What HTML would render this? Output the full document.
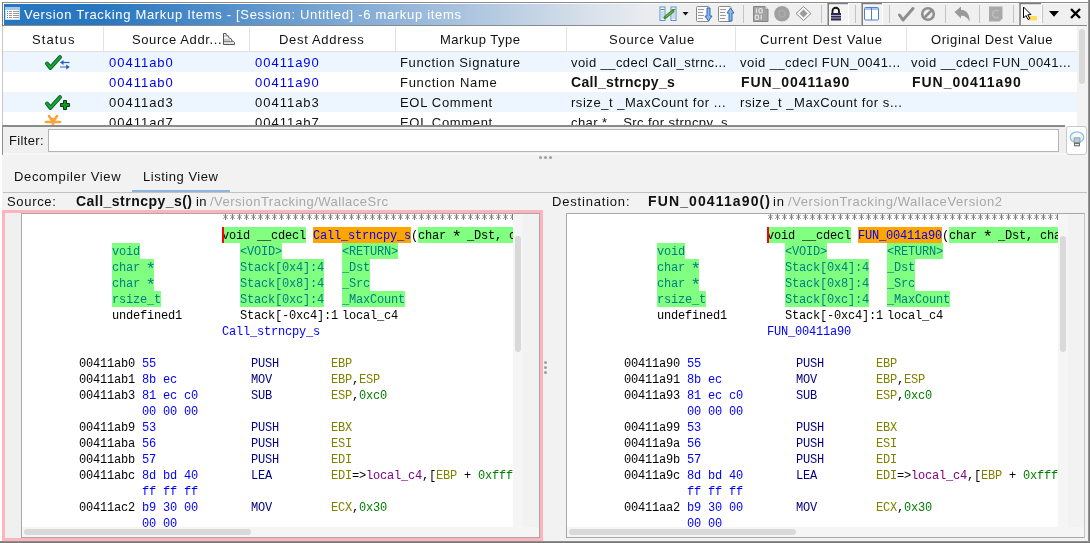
<!DOCTYPE html>
<html><head><meta charset="utf-8">
<style>
*{margin:0;padding:0;box-sizing:border-box}
html,body{width:1090px;height:543px;overflow:hidden;background:#fff;font-family:"Liberation Sans",sans-serif;font-size:13px;color:#000}
div{position:absolute}
.t{will-change:transform;white-space:pre;font-size:13px;line-height:16px;font-family:"Liberation Sans",sans-serif}
.m{will-change:transform;white-space:pre;font-size:12px;line-height:16px;font-family:"Liberation Mono",monospace;letter-spacing:-0.2px}
.b{}
.ast{display:inline-block;width:7px;transform:scale(1.45,1.45) translate(0.1px,-0.1px);transform-origin:50% 30%}
.clip{overflow:hidden}
.sep{width:1px;height:18px;top:5px;background:#c8c8c8}
</style></head><body>
<!-- main bg -->
<div style="left:2px;top:2px;width:1087px;height:540px;background:#f2f2f2"></div>
<!-- outer frame -->
<div style="left:2px;top:2px;width:1086px;height:1px;background:#8c8c8c"></div>
<div style="left:2px;top:2px;width:1px;height:24px;background:#7c7c7c"></div>
<div style="left:2px;top:26px;width:1px;height:100px;background:#c6c6c6"></div>
<div style="left:2px;top:125px;width:2px;height:30px;background:linear-gradient(90deg,#9a9a9a,#7a7a7a)"></div>
<div style="left:1088px;top:0px;width:2px;height:543px;background:linear-gradient(90deg,#a0a0a0,#6c6c6c)"></div>
<div style="left:0px;top:541px;width:1090px;height:2px;background:linear-gradient(180deg,#9a9a9a,#6c6c6c)"></div>
<!-- title bar -->
<div style="left:3px;top:3px;width:1084px;height:1px;background:#fafafa"></div>
<div style="left:3px;top:3px;width:1px;height:22px;background:#fafafa"></div>
<div style="left:4px;top:4px;width:1083px;height:21px;background:linear-gradient(90deg,#2776c0 0px,#2877c0 96px,#4a8ac8 196px,#6c9fd0 296px,#93b5da 396px,#b7cce2 496px,#dce3ec 596px,#e9ecf0 641px,#efefef 690px,#f0f0f0 1083px)"></div>
<div style="left:3px;top:25px;width:1084px;height:1px;background:#8a8a8a"></div>
<!-- title icon -->
<div style="left:5px;top:7px;width:15px;height:13px;background:#fff;border:1px solid #c9d9ee"></div>
<div style="left:5px;top:7px;width:15px;height:3px;background:#a9c6ea"></div>
<div style="left:7px;top:11px;width:1px;height:1px;background:#3a8ee6;box-shadow:0 2px #3a8ee6,0 4px #3a8ee6,0 6px #3a8ee6"></div>
<div style="left:9px;top:11px;width:3px;height:1px;background:#999;box-shadow:0 2px #999,0 4px #999,0 6px #999,4px 0 #999,4px 2px #999,4px 4px #999,4px 6px #999,7px 0 #999,7px 2px #999,7px 4px #999,7px 6px #999"></div>

<!-- TOOLBAR -->
<svg style="position:absolute;left:0;top:0" width="1090" height="26" viewBox="0 0 1090 26">
<!-- icon1: compare columns with green link -->
<g>
<rect x="660" y="7" width="5" height="13.5" fill="#fff" stroke="#5b8fd4" stroke-width="1"/>
<line x1="660.5" y1="9.5" x2="664.5" y2="9.5" stroke="#3aa03a"/>
<line x1="661" y1="12" x2="664" y2="12" stroke="#9bb7e0"/><line x1="661" y1="14" x2="664" y2="14" stroke="#9bb7e0"/><line x1="661" y1="16" x2="664" y2="16" stroke="#9bb7e0"/><line x1="661" y1="18" x2="664" y2="18" stroke="#9bb7e0"/>
<rect x="671" y="7" width="5" height="13.5" fill="#fff" stroke="#5b8fd4" stroke-width="1"/>
<line x1="671.5" y1="9.5" x2="675.5" y2="9.5" stroke="#3aa03a"/>
<line x1="672" y1="12" x2="675" y2="12" stroke="#9bb7e0"/><line x1="672" y1="14" x2="675" y2="14" stroke="#9bb7e0"/><line x1="672" y1="16" x2="675" y2="16" stroke="#9bb7e0"/><line x1="672" y1="18" x2="675" y2="18" stroke="#9bb7e0"/>
<path d="M665 17.5 L673 11" stroke="#3d8b2f" stroke-width="3" stroke-linecap="round"/>
<path d="M665.5 17 L672.5 11.5" stroke="#7cc95a" stroke-width="1"/>
</g>
<path d="M682.5 12 L688.5 12 L685.5 15.5 Z" fill="#111"/>
<!-- icon2: doc with down arrow -->
<rect x="696.5" y="6.5" width="12.5" height="15" rx="1" fill="#fafafa" stroke="#8a8a8a"/>
<g stroke="#9a9a9a" stroke-width="1"><line x1="698" y1="9.5" x2="704" y2="9.5"/><line x1="698" y1="12.5" x2="703" y2="12.5"/><line x1="698" y1="15.5" x2="704" y2="15.5"/><line x1="698" y1="18.5" x2="703" y2="18.5"/></g>
<path d="M707 8 L710 8 L710 16 L712 16 L708.5 21 L705 16 L707 16 Z" fill="#8cb6e6" stroke="#2f6ab8" stroke-width="1"/>
<!-- icon3: doc with up arrow -->
<rect x="718.5" y="6.5" width="12.5" height="15" rx="1" fill="#fafafa" stroke="#8a8a8a"/>
<g stroke="#9a9a9a" stroke-width="1"><line x1="720" y1="9.5" x2="726" y2="9.5"/><line x1="720" y1="12.5" x2="725" y2="12.5"/><line x1="720" y1="15.5" x2="726" y2="15.5"/><line x1="720" y1="18.5" x2="725" y2="18.5"/></g>
<path d="M729 21 L732 21 L732 13 L734 13 L730.5 8 L727 13 L729 13 Z" fill="#8cb6e6" stroke="#2f6ab8" stroke-width="1"/>
<!-- separators -->
<g fill="#c4c4c4"><rect x="743" y="5" width="1" height="18"/><rect x="821" y="5" width="1" height="18"/><rect x="855" y="5" width="1" height="18"/><rect x="889" y="5" width="1" height="18"/><rect x="945" y="5" width="1" height="18"/><rect x="979" y="5" width="1" height="18"/><rect x="1013" y="5" width="1" height="18"/><rect x="1042" y="5" width="1" height="18"/></g>
<!-- binary doc -->
<path d="M753.5 6.5 L765 6.5 L768 9.5 L768 21.5 L753.5 21.5 Z" fill="#a3a3a3" stroke="#858585"/>
<path d="M765 6.5 L765 9.5 L768 9.5" fill="#e8e8e8" stroke="#858585" stroke-width="0.8"/>
<g fill="none" stroke="#e2e2e2" stroke-width="1.3">
<line x1="756.5" y1="8.5" x2="756.5" y2="13"/><rect x="759" y="8.7" width="3.2" height="4.2" rx="1.2"/>
<rect x="755.3" y="15.2" width="3.2" height="4.2" rx="1.2"/><line x1="761.2" y1="15" x2="761.2" y2="19.5"/>
</g>
<!-- gray circle -->
<circle cx="782" cy="13.8" r="7.8" fill="#a0a0a0"/>
<circle cx="782" cy="13.8" r="3.2" fill="none" stroke="#ababab" stroke-width="1.5"/>
<!-- diamond -->
<path d="M803.5 6.5 L811 13.5 L803.5 20.5 L796 13.5 Z" fill="#f4f4f4" stroke="#8c8c8c" stroke-width="1"/>
<path d="M803.5 9.5 L807.5 13.5 L803.5 17.5 L799.5 13.5 Z" fill="#9a9a9a"/>
<!-- lock pressed button -->
<rect x="828" y="3" width="20" height="22" fill="#f4f4f4"/>
<rect x="827.5" y="3" width="1.5" height="22" fill="#7d7d7d"/><rect x="827.5" y="3" width="21" height="1.2" fill="#7d7d7d"/>
<rect x="848" y="3" width="1" height="22" fill="#ffffff"/>
<path d="M832.5 13 L832.5 11 A3 3 0 0 1 839 11 L839 13" fill="none" stroke="#111" stroke-width="1.8"/>
<rect x="831" y="13" width="10" height="7.5" fill="#2c2c4a"/>
<g stroke="#a9a9d9" stroke-width="1"><line x1="831" y1="15.5" x2="841" y2="15.5"/><line x1="831" y1="18" x2="841" y2="18"/></g>
<!-- window pressed button -->
<rect x="862" y="3" width="20" height="22" fill="#f4f4f4"/>
<rect x="861.5" y="3" width="1.5" height="22" fill="#7d7d7d"/><rect x="861.5" y="3" width="21" height="1.2" fill="#7d7d7d"/>
<rect x="882" y="3" width="1" height="22" fill="#ffffff"/>
<rect x="864.5" y="7.5" width="14" height="12.5" rx="1" fill="#fff" stroke="#4f7ccc"/>
<rect x="865" y="8" width="13" height="2" fill="#a8c6ee"/>
<line x1="871.5" y1="8" x2="871.5" y2="20" stroke="#4f7ccc"/>
<!-- gray check -->
<path d="M899.5 15 L903 20 L913 8.5" fill="none" stroke="#8e8e8e" stroke-width="3" stroke-linecap="round" stroke-linejoin="round"/>
<!-- no-entry -->
<circle cx="928" cy="14" r="5.8" fill="none" stroke="#8e8e8e" stroke-width="2.6"/>
<line x1="924.5" y1="17.5" x2="931.5" y2="10.5" stroke="#8e8e8e" stroke-width="2.6"/>
<!-- undo arrow -->
<path d="M954.5 12 L961 6.5 L961 9.8 C966 10 970 14 969.5 21.5 C967.5 17.5 964.5 15.5 961 15.8 L961 18.5 Z" fill="#9a9a9a"/>
<!-- C doc -->
<path d="M989 6.5 L1002.5 6.5 L1002.5 18.5 L999.5 21.5 L989 21.5 Z" fill="#a9a9a9"/>
<path d="M998.5 11.2 A3.6 3.6 0 1 0 998.5 16.8" fill="none" stroke="#bdbdbd" stroke-width="1.6"/>
<!-- cursor pressed button -->
<rect x="1020" y="3" width="21" height="22" fill="#f4f4f4"/>
<rect x="1019.3" y="3" width="1.5" height="22" fill="#7d7d7d"/><rect x="1019.3" y="3" width="21.7" height="1.2" fill="#7d7d7d"/>
<rect x="1041" y="3" width="1" height="22" fill="#ffffff"/>
<rect x="1028.5" y="16" width="8.5" height="4.5" fill="#ffdc5a"/>
<path d="M1023.5 7 L1023.5 18 L1026 15.5 L1028 19.5 L1029.8 18.6 L1027.8 14.8 L1031 14.5 Z" fill="#fff" stroke="#000" stroke-width="1"/>
<!-- dropdown triangle -->
<path d="M1049 11 L1059 11 L1054 16.8 Z" fill="#000"/>
<!-- close X -->
<path d="M1071 9 L1080 18 M1080 9 L1071 18" stroke="#000" stroke-width="2.4"/>
</svg>


<!-- table -->
<div style="left:3px;top:26px;width:1074px;height:25px;background:#fff"></div>
<div style="left:3px;top:51px;width:1074px;height:1px;background:#e0e0e0"></div>
<div style="left:103px;top:27px;width:1px;height:24px;background:#e2e2e2"></div>
<div style="left:249px;top:27px;width:1px;height:24px;background:#e2e2e2"></div>
<div style="left:395px;top:27px;width:1px;height:24px;background:#e2e2e2"></div>
<div style="left:566px;top:27px;width:1px;height:24px;background:#e2e2e2"></div>
<div style="left:735px;top:27px;width:1px;height:24px;background:#e2e2e2"></div>
<div style="left:906px;top:27px;width:1px;height:24px;background:#e2e2e2"></div>
<div style="left:3px;top:52px;width:1074px;height:20px;background:#edf6fe"></div>
<div style="left:3px;top:72px;width:1074px;height:20px;background:#fff"></div>
<div style="left:3px;top:92px;width:1074px;height:20px;background:#edf6fe"></div>
<div style="left:3px;top:112px;width:1074px;height:14px;background:#fff"></div>
<!-- table vscroll -->
<div style="left:1077px;top:26px;width:10px;height:100px;background:#f3f3f3"></div>
<div style="left:1079px;top:29px;width:6px;height:55px;background:#d9d9d9;border-radius:3px"></div>
<!-- sort icon -->
<svg style="position:absolute;left:0;top:0" width="240" height="50" viewBox="0 0 240 50">
<path d="M223.5 44.5 L223.5 33.5 L226 33.5 L226.5 35.5 L228.5 36 L229 38 L231 38.5 L232 41 L233.5 41.5 L234.5 42.5 L234.5 44.5 Z" fill="#fff" stroke="#555" stroke-width="1" stroke-linejoin="round"/>
<rect x="224" y="38.5" width="6" height="2.5" fill="#c8c8c8"/>
<line x1="224" y1="36" x2="227.5" y2="36" stroke="#888" stroke-width="0.8"/>
<line x1="224" y1="41.6" x2="232.5" y2="41.6" stroke="#666" stroke-width="0.9"/>
<line x1="224" y1="43" x2="234" y2="43" stroke="#aaa" stroke-width="0.6"/>
</svg>
<!-- status icons -->
<svg style="position:absolute;left:0;top:0" width="120" height="126" viewBox="0 0 120 126">
<path d="M47 63.5 L50.3 67.8 L60 57.2" fill="none" stroke="#0b5e1c" stroke-width="4" stroke-linecap="round" stroke-linejoin="round"/>
<path d="M47 63.5 L50.3 67.8 L60 57.2" fill="none" stroke="#13a23a" stroke-width="2.4" stroke-linecap="round" stroke-linejoin="round"/>
<path d="M69.5 62.5 L62 62.5" stroke="#2a60b2" stroke-width="1.2"/><path d="M60 62.5 L63.5 60 L63.5 65 Z" fill="#2a60b2"/>
<path d="M60 67 L67 67" stroke="#6f95cc" stroke-width="1.4"/><path d="M69.8 67 L66.2 64.5 L66.2 69.5 Z" fill="#2a60b2"/>
<path d="M47 103.5 L50.3 107.8 L60 97.2" fill="none" stroke="#0b5e1c" stroke-width="4" stroke-linecap="round" stroke-linejoin="round"/>
<path d="M47 103.5 L50.3 107.8 L60 97.2" fill="none" stroke="#13a23a" stroke-width="2.4" stroke-linecap="round" stroke-linejoin="round"/>
<path d="M63.5 100.5 L66.5 100.5 L66.5 103.5 L69.5 103.5 L69.5 106.5 L66.5 106.5 L66.5 109.5 L63.5 109.5 L63.5 106.5 L60.5 106.5 L60.5 103.5 L63.5 103.5 Z" fill="#0c9a20" stroke="#033a0a" stroke-width="1"/>
<g stroke="#f7a53a" stroke-width="2.6" stroke-linecap="round" fill="none">
<path d="M46 122 L60 122"/><path d="M53 122 L49 116"/><path d="M53 122 L57 116"/><path d="M53 119 L53 125"/>
</g>
</svg>

<div class="t" style="left:31.5px;top:32px;color:#111;font-weight:normal;letter-spacing:1.109px;">Status</div>
<div class="t" style="left:131.8px;top:32px;color:#111;font-weight:normal;letter-spacing:0.602px;">Source Addr...</div>
<div class="t" style="left:278.8px;top:32px;color:#111;font-weight:normal;letter-spacing:0.679px;">Dest Address</div>
<div class="t" style="left:440.0px;top:32px;color:#111;font-weight:normal;letter-spacing:0.516px;">Markup Type</div>
<div class="t" style="left:608.6px;top:32px;color:#111;font-weight:normal;letter-spacing:0.738px;">Source Value</div>
<div class="t" style="left:759.7px;top:32px;color:#111;font-weight:normal;letter-spacing:0.724px;">Current Dest Value</div>
<div class="t" style="left:930.8px;top:32px;color:#111;font-weight:normal;letter-spacing:0.581px;">Original Dest Value</div>
<div class="t" style="left:108.9px;top:55px;color:#0000f0;font-weight:normal;letter-spacing:0.989px;">00411ab0</div>
<div class="t" style="left:254.8px;top:55px;color:#0000f0;font-weight:normal;letter-spacing:0.989px;">00411a90</div>
<div class="t" style="left:399.6px;top:55px;color:#111;font-weight:normal;letter-spacing:0.646px;">Function Signature</div>
<div class="t" style="left:570.7px;top:55px;color:#111;font-weight:normal;letter-spacing:0.428px;">void __cdecl Call_strnc...</div>
<div class="t" style="left:740.2px;top:55px;color:#111;font-weight:normal;letter-spacing:0.457px;">void __cdecl FUN_0041...</div>
<div class="t" style="left:910.9px;top:55px;color:#111;font-weight:normal;letter-spacing:0.436px;">void __cdecl FUN_0041...</div>
<div class="t" style="left:108.9px;top:75px;color:#0000f0;font-weight:normal;letter-spacing:0.989px;">00411ab0</div>
<div class="t" style="left:254.8px;top:75px;color:#0000f0;font-weight:normal;letter-spacing:0.989px;">00411a90</div>
<div class="t" style="left:399.6px;top:75px;color:#111;font-weight:normal;letter-spacing:0.713px;">Function Name</div>
<div class="t" style="left:570.7px;top:74px;color:#111;font-weight:bold;font-size:14px;letter-spacing:0.323px;">Call_strncpy_s</div>
<div class="t" style="left:740.9px;top:74px;color:#111;font-weight:bold;font-size:14px;letter-spacing:0.930px;">FUN_00411a90</div>
<div class="t" style="left:911.6px;top:74px;color:#111;font-weight:bold;font-size:14px;letter-spacing:0.966px;">FUN_00411a90</div>
<div class="t" style="left:108.9px;top:95px;color:#111;font-weight:normal;letter-spacing:0.989px;">00411ad3</div>
<div class="t" style="left:254.8px;top:95px;color:#111;font-weight:normal;letter-spacing:0.989px;">00411ab3</div>
<div class="t" style="left:399.6px;top:95px;color:#111;font-weight:normal;letter-spacing:0.673px;">EOL Comment</div>
<div class="t" style="left:570.7px;top:95px;color:#111;font-weight:normal;letter-spacing:0.541px;">rsize_t _MaxCount for ...</div>
<div class="t" style="left:740.2px;top:95px;color:#111;font-weight:normal;letter-spacing:0.548px;">rsize_t _MaxCount for s...</div>
<div class="t" style="left:108.9px;top:115px;color:#111;font-weight:normal;letter-spacing:0.989px;">00411ad7</div>
<div class="t" style="left:254.8px;top:115px;color:#111;font-weight:normal;letter-spacing:0.989px;">00411ab7</div>
<div class="t" style="left:399.6px;top:115px;color:#111;font-weight:normal;letter-spacing:0.673px;">EOL Comment</div>
<div class="t" style="left:570.7px;top:115px;color:#111;font-weight:normal;letter-spacing:0.426px;">char *  _Src for strncpy_s</div>

<div style="left:3px;top:125px;width:1062px;height:2px;background:#8a8a8a"></div>
<!-- filter row -->
<div style="left:3px;top:127px;width:1084px;height:26px;background:#f0f0f0"></div>
<div style="left:3px;top:153px;width:1084px;height:2px;background:#f8f8f8"></div>
<div style="left:48px;top:129px;width:1011px;height:23px;background:#fff;border:1px solid #b4b4b4"></div>
<div style="left:1066px;top:126px;width:21px;height:29px;background:#fff;border:1px solid #c8c8c8;border-radius:3px"></div>
<svg style="position:absolute;left:1062px;top:124px" width="28" height="34" viewBox="1062 124 28 34">
<ellipse cx="1077" cy="137.3" rx="6.8" ry="5.4" fill="#e4f2fb" stroke="#86bde3" stroke-width="1.2"/>
<ellipse cx="1077" cy="136.3" rx="4.2" ry="3" fill="#f6fbfe"/>
<rect x="1074" y="137.8" width="6" height="5" fill="#a8cdea" stroke="#9b8a5a" stroke-width="0.7"/>
<rect x="1074" y="142.8" width="6" height="3.5" fill="#6b6b6b"/>
<rect x="1075" y="144" width="4" height="1.2" fill="#eee"/>
</svg>

<!-- splitter dots -->
<div style="left:539px;top:156px;width:3px;height:3px;background:#a0a0a0;border-radius:50%;box-shadow:5px 0 #a0a0a0,10px 0 #a0a0a0"></div>
<!-- tabs -->
<div style="left:132px;top:190px;width:98px;height:2px;background:#8db5de"></div>
<div style="left:3px;top:192px;width:1084px;height:1px;background:#c2c2c2"></div>

<!-- SANS -->
<div class="t" style="left:24.1px;top:7px;color:#fff;font-weight:normal;letter-spacing:0.688px;">Version Tracking Markup Items - [Session: Untitled] -6 markup items</div>
<div class="t" style="left:8.9px;top:133px;color:#111;font-weight:normal;letter-spacing:0.333px;">Filter:</div>
<div class="t" style="left:13.7px;top:169px;color:#111;font-weight:normal;letter-spacing:0.665px;">Decompiler View</div>
<div class="t" style="left:143.3px;top:169px;color:#111;font-weight:normal;letter-spacing:0.524px;">Listing View</div>
<div class="t" style="left:6.8px;top:194px;color:#111;font-weight:normal;letter-spacing:0.683px;">Source:</div>
<div class="t" style="left:75.8px;top:193px;color:#111;font-weight:bold;font-size:14px;letter-spacing:0.471px;">Call_strncpy_s()</div>
<div class="t" style="left:195.8px;top:194px;color:#111;font-weight:normal;letter-spacing:0.382px;">in</div>
<div class="t" style="left:210.3px;top:194px;color:#a8a8a8;font-weight:normal;letter-spacing:0.492px;">/VersionTracking/WallaceSrc</div>
<div class="t" style="left:551.8px;top:194px;color:#111;font-weight:normal;letter-spacing:0.805px;">Destination:</div>
<div class="t" style="left:648.3px;top:193px;color:#111;font-weight:bold;font-size:14px;letter-spacing:1.123px;">FUN_00411a90()</div>
<div class="t" style="left:773.3px;top:194px;color:#111;font-weight:normal;letter-spacing:0.882px;">in</div>
<div class="t" style="left:787.8px;top:194px;color:#a8a8a8;font-weight:normal;letter-spacing:0.571px;">/VersionTracking/WallaceVersion2</div>

<!-- left pane -->
<div style="left:2px;top:210px;width:541px;height:331px;background:#ffb3bf"></div>
<div style="left:5px;top:213px;width:535px;height:325px;background:#f0f0f0"></div>
<div style="left:21px;top:213px;width:519px;height:325px;border:1px solid #a8a8a8;background:#f2f2f2"></div>
<div style="left:22px;top:214px;width:491px;height:313px;background:#fff"></div>
<div style="left:513px;top:214px;width:10px;height:313px;background:#f5f5f5"></div>
<div style="left:515px;top:236px;width:6px;height:116px;background:#d9d9d9;border-radius:3px"></div>
<div style="left:22px;top:527px;width:517px;height:10px;background:#f5f5f5"></div>
<div style="left:24px;top:529px;width:227px;height:6px;background:#d9d9d9;border-radius:3px"></div>
<div class="clip" style="left:22px;top:214px;width:491px;height:313px"><div style="left:-22px;top:-214px;width:1090px;height:543px">
<svg style="position:absolute;left:222px;top:211px" width="300" height="12"><defs><pattern id="st0" x="0" y="0" width="7" height="12" patternUnits="userSpaceOnUse"><g stroke="#7c7c7c" stroke-width="1.1"><line x1="3.5" y1="2.6" x2="3.5" y2="9"/></g><g stroke="#8a8a8a" stroke-width="1"><line x1="1.3" y1="4.2" x2="5.7" y2="7.6"/><line x1="1.3" y1="7.6" x2="5.7" y2="4.2"/></g></pattern></defs><rect width="300" height="12" fill="url(#st0)"/></svg>
<div class="b" style="left:222px;top:227px;width:84px;height:16px;background:#80ff80"></div>
<div class="b" style="left:313px;top:227px;width:98px;height:16px;background:#ffa500"></div>
<div class="b" style="left:418px;top:227px;width:200px;height:16px;background:#80ff80"></div>
<div class="m" style="left:222px;top:228px;"><span style="color:#000">void __cdecl </span><span style="color:#0000ff">Call_strncpy_s</span><span style="color:#000">(</span><span style="color:#000">char <span class="ast">*</span> _Dst, char <span class="ast">*</span> _Src, rsize_t</span></div>
<div class="b" style="left:222px;top:227px;width:2px;height:16px;background:#ff0000"></div>
<div class="b" style="left:112px;top:243px;width:28px;height:16px;background:#80ff80"></div>
<div class="b" style="left:112px;top:259px;width:42px;height:32px;background:#80ff80"></div>
<div class="b" style="left:112px;top:291px;width:49px;height:16px;background:#80ff80"></div>
<div class="b" style="left:240px;top:243px;width:42px;height:16px;background:#80ff80"></div>
<div class="b" style="left:240px;top:259px;width:84px;height:48px;background:#80ff80"></div>
<div class="b" style="left:342px;top:243px;width:56px;height:16px;background:#80ff80"></div>
<div class="b" style="left:342px;top:259px;width:28px;height:32px;background:#80ff80"></div>
<div class="b" style="left:342px;top:291px;width:63px;height:16px;background:#80ff80"></div>
<div class="m" style="left:112px;top:244px;"><span style="color:#008080">void</span></div>
<div class="m" style="left:240px;top:244px;"><span style="color:#008080">&lt;VOID&gt;</span></div>
<div class="m" style="left:342px;top:244px;"><span style="color:#008080">&lt;RETURN&gt;</span></div>
<div class="m" style="left:112px;top:260px;"><span style="color:#008080">char <span class="ast">*</span></span></div>
<div class="m" style="left:240px;top:260px;"><span style="color:#008080">Stack[0x4]:4</span></div>
<div class="m" style="left:342px;top:260px;"><span style="color:#008080">_Dst</span></div>
<div class="m" style="left:112px;top:276px;"><span style="color:#008080">char <span class="ast">*</span></span></div>
<div class="m" style="left:240px;top:276px;"><span style="color:#008080">Stack[0x8]:4</span></div>
<div class="m" style="left:342px;top:276px;"><span style="color:#008080">_Src</span></div>
<div class="m" style="left:112px;top:292px;"><span style="color:#008080">rsize_t</span></div>
<div class="m" style="left:240px;top:292px;"><span style="color:#008080">Stack[0xc]:4</span></div>
<div class="m" style="left:342px;top:292px;"><span style="color:#008080">_MaxCount</span></div>
<div class="m" style="left:112px;top:308px;"><span style="color:#000">undefined1</span></div>
<div class="m" style="left:240px;top:308px;"><span style="color:#000">Stack[-0xc4]:1</span></div>
<div class="m" style="left:342px;top:308px;"><span style="color:#000">local_c4</span></div>
<div class="m" style="left:222px;top:324px;"><span style="color:#0000ff">Call_strncpy_s</span></div>
<div class="m" style="left:79px;top:356px;"><span style="color:#000">00411ab0</span></div>
<div class="m" style="left:142px;top:356px;"><span style="color:#0000ff">55</span></div>
<div class="m" style="left:251px;top:356px;"><span style="color:#000080">PUSH</span></div>
<div class="m" style="left:331px;top:356px;"><span style="color:#808000">EBP</span></div>
<div class="m" style="left:79px;top:372px;"><span style="color:#000">00411ab1</span></div>
<div class="m" style="left:142px;top:372px;"><span style="color:#0000ff">8b ec</span></div>
<div class="m" style="left:251px;top:372px;"><span style="color:#000080">MOV</span></div>
<div class="m" style="left:331px;top:372px;"><span style="color:#808000">EBP</span><span style="color:#000">,</span><span style="color:#808000">ESP</span></div>
<div class="m" style="left:79px;top:388px;"><span style="color:#000">00411ab3</span></div>
<div class="m" style="left:142px;top:388px;"><span style="color:#0000ff">81 ec c0</span></div>
<div class="m" style="left:251px;top:388px;"><span style="color:#000080">SUB</span></div>
<div class="m" style="left:331px;top:388px;"><span style="color:#808000">ESP</span><span style="color:#000">,</span><span style="color:#008000">0xc0</span></div>
<div class="m" style="left:142px;top:404px;"><span style="color:#0000ff">00 00 00</span></div>
<div class="m" style="left:79px;top:420px;"><span style="color:#000">00411ab9</span></div>
<div class="m" style="left:142px;top:420px;"><span style="color:#0000ff">53</span></div>
<div class="m" style="left:251px;top:420px;"><span style="color:#000080">PUSH</span></div>
<div class="m" style="left:331px;top:420px;"><span style="color:#808000">EBX</span></div>
<div class="m" style="left:79px;top:436px;"><span style="color:#000">00411aba</span></div>
<div class="m" style="left:142px;top:436px;"><span style="color:#0000ff">56</span></div>
<div class="m" style="left:251px;top:436px;"><span style="color:#000080">PUSH</span></div>
<div class="m" style="left:331px;top:436px;"><span style="color:#808000">ESI</span></div>
<div class="m" style="left:79px;top:452px;"><span style="color:#000">00411abb</span></div>
<div class="m" style="left:142px;top:452px;"><span style="color:#0000ff">57</span></div>
<div class="m" style="left:251px;top:452px;"><span style="color:#000080">PUSH</span></div>
<div class="m" style="left:331px;top:452px;"><span style="color:#808000">EDI</span></div>
<div class="m" style="left:79px;top:468px;"><span style="color:#000">00411abc</span></div>
<div class="m" style="left:142px;top:468px;"><span style="color:#0000ff">8d bd 40</span></div>
<div class="m" style="left:251px;top:468px;"><span style="color:#000080">LEA</span></div>
<div class="m" style="left:331px;top:468px;"><span style="color:#808000">EDI</span><span style="color:#000">=&gt;</span><span style="color:#800080">local_c4</span><span style="color:#000">,[</span><span style="color:#808000">EBP</span><span style="color:#000"> + </span><span style="color:#008000">0xffffff40]</span></div>
<div class="m" style="left:142px;top:484px;"><span style="color:#0000ff">ff ff ff</span></div>
<div class="m" style="left:79px;top:500px;"><span style="color:#000">00411ac2</span></div>
<div class="m" style="left:142px;top:500px;"><span style="color:#0000ff">b9 30 00</span></div>
<div class="m" style="left:251px;top:500px;"><span style="color:#000080">MOV</span></div>
<div class="m" style="left:331px;top:500px;"><span style="color:#808000">ECX</span><span style="color:#000">,</span><span style="color:#008000">0x30</span></div>
<div class="m" style="left:142px;top:516px;"><span style="color:#0000ff">00 00</span></div>
</div></div>
<!-- splitter v dots -->
<div style="left:543.5px;top:361px;width:3px;height:3px;background:#a0a0a0;border-radius:50%;box-shadow:0 5px #a0a0a0,0 10px #a0a0a0"></div>
<!-- right pane -->
<div style="left:566px;top:213px;width:519px;height:325px;border:1px solid #a8a8a8;border-right-color:#c4c4c4;background:#f2f2f2"></div>
<div style="left:567px;top:214px;width:491px;height:313px;background:#fff"></div>
<div style="left:1058px;top:214px;width:10px;height:313px;background:#f5f5f5"></div>
<div style="left:1060px;top:236px;width:6px;height:116px;background:#d9d9d9;border-radius:3px"></div>
<div style="left:567px;top:527px;width:517px;height:10px;background:#f5f5f5"></div>
<div style="left:569px;top:529px;width:227px;height:6px;background:#d9d9d9;border-radius:3px"></div>
<div class="clip" style="left:567px;top:214px;width:491px;height:313px"><div style="left:-567px;top:-214px;width:1090px;height:543px">
<svg style="position:absolute;left:767px;top:211px" width="300" height="12"><defs><pattern id="st545" x="0" y="0" width="7" height="12" patternUnits="userSpaceOnUse"><g stroke="#7c7c7c" stroke-width="1.1"><line x1="3.5" y1="2.6" x2="3.5" y2="9"/></g><g stroke="#8a8a8a" stroke-width="1"><line x1="1.3" y1="4.2" x2="5.7" y2="7.6"/><line x1="1.3" y1="7.6" x2="5.7" y2="4.2"/></g></pattern></defs><rect width="300" height="12" fill="url(#st545)"/></svg>
<div class="b" style="left:767px;top:227px;width:84px;height:16px;background:#80ff80"></div>
<div class="b" style="left:858px;top:227px;width:84px;height:16px;background:#ffa500"></div>
<div class="b" style="left:949px;top:227px;width:200px;height:16px;background:#80ff80"></div>
<div class="m" style="left:767px;top:228px;"><span style="color:#000">void __cdecl </span><span style="color:#0000ff">FUN_00411a90</span><span style="color:#000">(</span><span style="color:#000">char <span class="ast">*</span> _Dst, char <span class="ast">*</span> _Src, rsize_t</span></div>
<div class="b" style="left:767px;top:227px;width:2px;height:16px;background:#ff0000"></div>
<div class="b" style="left:657px;top:243px;width:28px;height:16px;background:#80ff80"></div>
<div class="b" style="left:657px;top:259px;width:42px;height:32px;background:#80ff80"></div>
<div class="b" style="left:657px;top:291px;width:49px;height:16px;background:#80ff80"></div>
<div class="b" style="left:785px;top:243px;width:42px;height:16px;background:#80ff80"></div>
<div class="b" style="left:785px;top:259px;width:84px;height:48px;background:#80ff80"></div>
<div class="b" style="left:887px;top:243px;width:56px;height:16px;background:#80ff80"></div>
<div class="b" style="left:887px;top:259px;width:28px;height:32px;background:#80ff80"></div>
<div class="b" style="left:887px;top:291px;width:63px;height:16px;background:#80ff80"></div>
<div class="m" style="left:657px;top:244px;"><span style="color:#008080">void</span></div>
<div class="m" style="left:785px;top:244px;"><span style="color:#008080">&lt;VOID&gt;</span></div>
<div class="m" style="left:887px;top:244px;"><span style="color:#008080">&lt;RETURN&gt;</span></div>
<div class="m" style="left:657px;top:260px;"><span style="color:#008080">char <span class="ast">*</span></span></div>
<div class="m" style="left:785px;top:260px;"><span style="color:#008080">Stack[0x4]:4</span></div>
<div class="m" style="left:887px;top:260px;"><span style="color:#008080">_Dst</span></div>
<div class="m" style="left:657px;top:276px;"><span style="color:#008080">char <span class="ast">*</span></span></div>
<div class="m" style="left:785px;top:276px;"><span style="color:#008080">Stack[0x8]:4</span></div>
<div class="m" style="left:887px;top:276px;"><span style="color:#008080">_Src</span></div>
<div class="m" style="left:657px;top:292px;"><span style="color:#008080">rsize_t</span></div>
<div class="m" style="left:785px;top:292px;"><span style="color:#008080">Stack[0xc]:4</span></div>
<div class="m" style="left:887px;top:292px;"><span style="color:#008080">_MaxCount</span></div>
<div class="m" style="left:657px;top:308px;"><span style="color:#000">undefined1</span></div>
<div class="m" style="left:785px;top:308px;"><span style="color:#000">Stack[-0xc4]:1</span></div>
<div class="m" style="left:887px;top:308px;"><span style="color:#000">local_c4</span></div>
<div class="m" style="left:767px;top:324px;"><span style="color:#0000ff">FUN_00411a90</span></div>
<div class="m" style="left:624px;top:356px;"><span style="color:#000">00411a90</span></div>
<div class="m" style="left:687px;top:356px;"><span style="color:#0000ff">55</span></div>
<div class="m" style="left:796px;top:356px;"><span style="color:#000080">PUSH</span></div>
<div class="m" style="left:876px;top:356px;"><span style="color:#808000">EBP</span></div>
<div class="m" style="left:624px;top:372px;"><span style="color:#000">00411a91</span></div>
<div class="m" style="left:687px;top:372px;"><span style="color:#0000ff">8b ec</span></div>
<div class="m" style="left:796px;top:372px;"><span style="color:#000080">MOV</span></div>
<div class="m" style="left:876px;top:372px;"><span style="color:#808000">EBP</span><span style="color:#000">,</span><span style="color:#808000">ESP</span></div>
<div class="m" style="left:624px;top:388px;"><span style="color:#000">00411a93</span></div>
<div class="m" style="left:687px;top:388px;"><span style="color:#0000ff">81 ec c0</span></div>
<div class="m" style="left:796px;top:388px;"><span style="color:#000080">SUB</span></div>
<div class="m" style="left:876px;top:388px;"><span style="color:#808000">ESP</span><span style="color:#000">,</span><span style="color:#008000">0xc0</span></div>
<div class="m" style="left:687px;top:404px;"><span style="color:#0000ff">00 00 00</span></div>
<div class="m" style="left:624px;top:420px;"><span style="color:#000">00411a99</span></div>
<div class="m" style="left:687px;top:420px;"><span style="color:#0000ff">53</span></div>
<div class="m" style="left:796px;top:420px;"><span style="color:#000080">PUSH</span></div>
<div class="m" style="left:876px;top:420px;"><span style="color:#808000">EBX</span></div>
<div class="m" style="left:624px;top:436px;"><span style="color:#000">00411a9a</span></div>
<div class="m" style="left:687px;top:436px;"><span style="color:#0000ff">56</span></div>
<div class="m" style="left:796px;top:436px;"><span style="color:#000080">PUSH</span></div>
<div class="m" style="left:876px;top:436px;"><span style="color:#808000">ESI</span></div>
<div class="m" style="left:624px;top:452px;"><span style="color:#000">00411a9b</span></div>
<div class="m" style="left:687px;top:452px;"><span style="color:#0000ff">57</span></div>
<div class="m" style="left:796px;top:452px;"><span style="color:#000080">PUSH</span></div>
<div class="m" style="left:876px;top:452px;"><span style="color:#808000">EDI</span></div>
<div class="m" style="left:624px;top:468px;"><span style="color:#000">00411a9c</span></div>
<div class="m" style="left:687px;top:468px;"><span style="color:#0000ff">8d bd 40</span></div>
<div class="m" style="left:796px;top:468px;"><span style="color:#000080">LEA</span></div>
<div class="m" style="left:876px;top:468px;"><span style="color:#808000">EDI</span><span style="color:#000">=&gt;</span><span style="color:#800080">local_c4</span><span style="color:#000">,[</span><span style="color:#808000">EBP</span><span style="color:#000"> + </span><span style="color:#008000">0xffffff40]</span></div>
<div class="m" style="left:687px;top:484px;"><span style="color:#0000ff">ff ff ff</span></div>
<div class="m" style="left:624px;top:500px;"><span style="color:#000">00411aa2</span></div>
<div class="m" style="left:687px;top:500px;"><span style="color:#0000ff">b9 30 00</span></div>
<div class="m" style="left:796px;top:500px;"><span style="color:#000080">MOV</span></div>
<div class="m" style="left:876px;top:500px;"><span style="color:#808000">ECX</span><span style="color:#000">,</span><span style="color:#008000">0x30</span></div>
<div class="m" style="left:687px;top:516px;"><span style="color:#0000ff">00 00</span></div>
</div></div>
</body></html>
